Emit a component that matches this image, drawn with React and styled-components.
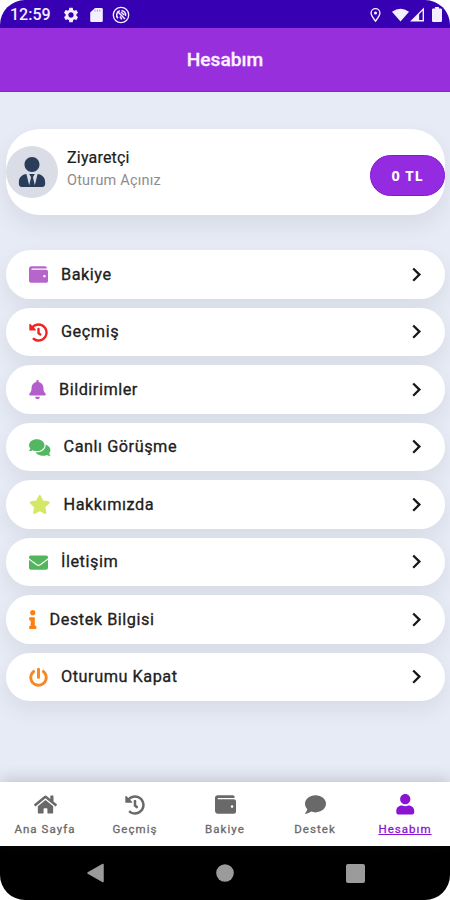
import React from "react";
import styled, { createGlobalStyle } from "styled-components";
import {
  FaWallet, FaHistory, FaBell, FaComments, FaStar, FaEnvelope, FaInfo,
  FaPowerOff, FaHome, FaComment, FaUser, FaUserTie,
} from "react-icons/fa";
import { MdSettings } from "react-icons/md";

const GlobalStyle = createGlobalStyle`
  * { box-sizing: border-box; }
  body { margin: 0; background: #fff; font-family: Roboto, "Noto Sans", sans-serif; }
  svg { display: block; flex: none; }
`;

const Screen = styled.div`
  width: 450px;
  height: 900px;
  display: flex;
  flex-direction: column;
  overflow: hidden;
  border-radius: 25px;
  background: #e7ebf5;
`;

const StatusBar = styled.div`
  height: 28px;
  flex: none;
  display: flex;
  align-items: center;
  justify-content: space-between;
  padding: 1px 8px 0 10px;
  background: #3700b3;
  color: #f3efff;
`;

const StatusGroup = styled.div`
  display: flex;
  align-items: center;
`;

const Clock = styled.span`
  width: 52px;
  padding-top: 1px;
  font-size: 16px;
  line-height: 20px;
  font-weight: 500;
`;

const StatusIcon = styled.svg`
  margin-left: ${(p) => p.$gap || 0}px;
`;

const Header = styled.header`
  height: 64px;
  flex: none;
  display: flex;
  align-items: center;
  justify-content: center;
  background: #982fdd;
  border-bottom: 1px solid #8a1fd3;
  color: #fbf3ff;
  font-size: 19.2px;
  font-weight: 500;
  -webkit-text-stroke: 0.3px #fbf3ff;
`;

const Content = styled.main`
  flex: 1;
  min-height: 0;
  overflow: hidden;
  padding: 36.5px 5px 0 6px;
`;

const ProfileCard = styled.section`
  height: 86.5px;
  display: flex;
  align-items: center;
  border-radius: 34px;
  background: #fff;
  box-shadow: 0 10px 22px rgba(50, 60, 80, 0.09);
`;

const Avatar = styled.div`
  width: 52px;
  height: 52px;
  display: flex;
  align-items: center;
  justify-content: center;
  border-radius: 50%;
  background: #dadde6;
  color: #2a3d5a;
`;

const Identity = styled.div`
  flex: 1;
  padding: 0 0 5px 9px;
`;

const Name = styled.div`
  font-size: 16px;
  line-height: 22px;
  letter-spacing: 0.2px;
  color: #1c1c1c;
  -webkit-text-stroke: 0.2px #1c1c1c;
`;

const Hint = styled.div`
  font-size: 14.5px;
  line-height: 23px;
  letter-spacing: 0.2px;
  color: #8d8d8d;
`;

const Balance = styled.button`
  width: 75px;
  height: 41px;
  margin-top: 7px;
  padding: 0;
  border: 1px solid #8417d2;
  border-radius: 21px;
  background: #952be0;
  color: #fff;
  font: 700 14.5px "Open Sans", sans-serif;
  letter-spacing: 0.9px;
`;

const Menu = styled.nav`
  display: grid;
  gap: 9px;
  margin-top: 35.4px;
`;

const MenuRow = styled.a`
  height: 48.5px;
  display: flex;
  align-items: center;
  padding: 0 23px;
  border-radius: 25px;
  background: #fff;
  box-shadow: 0 9px 20px rgba(60, 65, 75, 0.09);
`;

const MenuIcon = styled.span`
  color: ${(p) => p.$color};
  svg { width: ${(p) => p.$width}px; height: 19px; }
`;

const MenuLabel = styled.span`
  flex: 1;
  margin-left: 13px;
  padding-top: 0.5px;
  font-size: 16.3px;
  line-height: 22px;
  letter-spacing: 0.53px;
  color: #202020;
  -webkit-text-stroke: 0.3px #202020;
`;

const TabBar = styled.nav`
  height: 64px;
  flex: none;
  position: relative;
  display: grid;
  grid-template-columns: repeat(5, 1fr);
  background: #fff;
  box-shadow: 0 -3px 14px rgba(60, 65, 75, 0.22);
`;

const Tab = styled.a`
  display: flex;
  flex-direction: column;
  align-items: center;
  padding-top: 11px;
  color: ${(p) => (p.$active ? "#8b14d3" : "#696969")};
`;

const TabIcon = styled.span`
  height: 23px;
  display: flex;
  align-items: center;
`;

const TabLabel = styled.span`
  margin-top: 6px;
  font-size: 11.5px;
  line-height: 15px;
  font-weight: 400;
  letter-spacing: 1.05px;
  -webkit-text-stroke: 0.3px currentColor;
  text-decoration: ${(p) => (p.$active ? "underline" : "none")};
`;

const SystemBar = styled.div`
  height: 54px;
  flex: none;
  display: flex;
  align-items: center;
  justify-content: space-between;
  padding: 0 85px 0 87px;
  background: #000;
`;

const items = [
  { label: "Bakiye", icon: FaWallet, color: "#b665cb", width: 19 },
  { label: "Geçmiş", icon: FaHistory, color: "#ed2420", width: 19 },
  { label: "Bildirimler", icon: FaBell, color: "#b25fcc", width: 17 },
  { label: "Canlı Görüşme", icon: FaComments, color: "#53b662", width: 21.5 },
  { label: "Hakkımızda", icon: FaStar, color: "#d5e764", width: 21.5 },
  { label: "İletişim", icon: FaEnvelope, color: "#53b65c", width: 19 },
  { label: "Destek Bilgisi", icon: FaInfo, color: "#f98012", width: 7.5 },
  { label: "Oturumu Kapat", icon: FaPowerOff, color: "#f58a24", width: 19 },
];

const tabs = [
  { label: "Ana Sayfa", icon: FaHome, size: 23 },
  { label: "Geçmiş", icon: FaHistory, size: 20 },
  { label: "Bakiye", icon: FaWallet, size: 21 },
  { label: "Destek", icon: FaComment, size: 21 },
  { label: "Hesabım", icon: FaUser, size: 20.5, active: true },
];

function Chevron() {
  return (
    <svg width="10" height="16" viewBox="0 0 10 16" fill="none" stroke="#181818" strokeWidth="2.3">
      <path d="M1.200 1.500 7.400 7.600 1.200 13.700" />
    </svg>
  );
}

export default function App() {
  return (
    <>
      <GlobalStyle />
      <Screen>
        <StatusBar>
          <StatusGroup>
            <Clock>12:59</Clock>
            <MdSettings size={18} />
            <StatusIcon $gap={10} width="13" height="16" viewBox="0 0 13 16" fill="currentColor">
              <path d="M5 1h6.500Q12.800 1 12.800 2.300v11.400q0 1.300-1.300 1.300h-10Q.2 15 .2 13.700V5.500Z" />
              <path d="M5 2.600v2M7.400 2.600v2M9.800 2.600v2" stroke="#3700b3" strokeWidth=".4" />
            </StatusIcon>
            <StatusIcon $gap={9} width="18" height="18" viewBox="0 0 18 18" fill="none" stroke="currentColor">
              <circle cx="9" cy="9" r="7.700" strokeWidth="1.300" />
              <path d="M6 12.300A4.600 4.600 0 0 1 8 4.600M9.500 4.400A4.600 4.600 0 0 1 13.500 10M5.300 5.300l7.700 7.700M8 10.500l1.800 2.800M9 6l3.200 3" strokeWidth="1.500" />
            </StatusIcon>
          </StatusGroup>
          <StatusGroup>
            <StatusIcon width="11" height="16" viewBox="0 0 12 16" fill="none" stroke="currentColor" strokeWidth="1.500">
              <path d="M6 14.700C4 12 1.200 8.700 1.200 5.800a4.800 4.800 0 0 1 9.600 0C10.800 8.700 8 12 6 14.700Z" />
              <circle cx="6" cy="5.800" r="1.700" fill="currentColor" stroke="none" />
            </StatusIcon>
            <StatusIcon $gap={11} width="17" height="14" viewBox="0 0 18 14" fill="currentColor">
              <path d="M0 3.500Q9-2.600 18 3.500L9 14Z" />
            </StatusIcon>
            <StatusIcon $gap={1} width="14" height="15" viewBox="0 0 15 15" fill="currentColor">
              <path d="M15 0v15H0ZM13.500 3.600 9.800 7.300v6.200h3.700Z" fillRule="evenodd" />
            </StatusIcon>
            <StatusIcon $gap={8} width="10" height="15" viewBox="0 0 10 15" fill="currentColor">
              <path d="M3 0h4v1.500h1.700Q10 1.500 10 2.800v10.900Q10 15 8.700 15H1.300Q0 15 0 13.700V2.800Q0 1.500 1.300 1.500H3Z" />
            </StatusIcon>
          </StatusGroup>
        </StatusBar>
        <Header>Hesabım</Header>
        <Content>
          <ProfileCard>
            <Avatar><FaUserTie size={30} /></Avatar>
            <Identity>
              <Name>Ziyaretçi</Name>
              <Hint>Oturum Açınız</Hint>
            </Identity>
            <Balance>0 TL</Balance>
          </ProfileCard>
          <Menu>
            {items.map(({ label, icon: Icon, color, width }) => (
              <MenuRow key={label}>
                <MenuIcon $color={color} $width={width}><Icon /></MenuIcon>
                <MenuLabel>{label}</MenuLabel>
                <Chevron />
              </MenuRow>
            ))}
          </Menu>
        </Content>
        <TabBar>
          {tabs.map(({ label, icon: Icon, size, active }) => (
            <Tab key={label} $active={active}>
              <TabIcon><Icon size={size} /></TabIcon>
              <TabLabel $active={active}>{label}</TabLabel>
            </Tab>
          ))}
        </TabBar>
        <SystemBar>
          <svg width="17" height="20" viewBox="0 0 17 20" fill="#9b9b9b" stroke="#9b9b9b" strokeWidth="1.500" strokeLinejoin="round">
            <path d="M1 10 16 1.500v17Z" />
          </svg>
          <svg width="18" height="18" viewBox="0 0 18 18" fill="#9b9b9b"><circle cx="9" cy="9" r="8.800" /></svg>
          <svg width="19" height="19" viewBox="0 0 19 19" fill="#9b9b9b"><rect width="19" height="19" rx="2" /></svg>
        </SystemBar>
      </Screen>
    </>
  );
}
